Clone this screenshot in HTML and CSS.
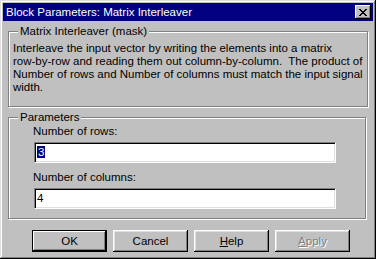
FILE: index.html
```html
<!DOCTYPE html>
<html lang="en">
<head>
  <meta charset="UTF-8" />
  <title>Block Parameters: Matrix Interleaver</title>
  <link rel="stylesheet" href="styles.css">
</head>
<body>
  <div class="window">
    <div class="titlebar">
      <span class="title">Block Parameters: Matrix Interleaver</span>
      <span class="close">
        <svg width="8" height="7" viewBox="0 0 8 7"><path d="M0 0h2v1h1v1h2v-1h1v-1h2v1h-1v1h-1v1h-1v1h1v1h1v1h1v1h-2v-1h-1v-1h-2v1h-1v1h-2v-1h1v-1h1v-1h1v-1h-1v-1h-1v-1h-1z" fill="#000"/></svg>
      </span>
    </div>

    <div class="content">
      <!-- mask description -->
      <fieldset class="group">
        <legend>Matrix Interleaver (mask)</legend>
        <p class="desc">Interleave the input vector by writing the elements into a matrix<br>
          row-by-row and reading them out column-by-column.&nbsp; The product of<br>
          Number of rows and Number of columns must match the input signal<br>
          width.</p>
      </fieldset>

      <!-- parameters -->
      <fieldset class="group">
        <legend>Parameters</legend>
        <div class="params">
          <label>Number of rows:</label>
          <div class="field"><span class="sel">3</span></div>
          <label class="second">Number of columns:</label>
          <div class="field">4</div>
        </div>
      </fieldset>

      <div class="buttons">
        <div class="btn default">OK</div>
        <div class="btn">Cancel</div>
        <div class="btn"><u>H</u>elp</div>
        <div class="btn disabled"><u>A</u>pply</div>
      </div>
    </div>
  </div>
</body>
</html>
```

FILE: styles.css
```css
body {
  margin: 0;
  font-family: "Liberation Sans", Arial, sans-serif;
  font-size: 11.5px;
  color: #000;
}
.window {
  width: 376px;
  height: 259px;
  box-sizing: border-box;
  padding: 3px;
  background: #c0c0c0;
  box-shadow: inset -1px -1px #000, inset 1px 1px #dfdfdf, inset -2px -2px #808080, inset 2px 2px #fff;
  display: flex;
  flex-direction: column;
}
.titlebar {
  height: 18px;
  background: #000080;
  color: #fff;
  display: flex;
  align-items: center;
  justify-content: space-between;
  padding: 0 2px 0 3px;
}
.close {
  width: 16px;
  height: 14px;
  box-sizing: border-box;
  background: #c0c0c0;
  box-shadow: inset -1px -1px #000, inset 1px 1px #fff, inset -2px -2px #808080;
  display: flex;
  align-items: center;
  justify-content: center;
}
.content {
  padding: 4px 7px 0 5px;
}
.group {
  margin: 0;
  padding: 0 4px 12px 4px;
  border: 1px solid #808080;
  box-shadow: inset 1px 1px #fff, 1px 1px #fff;
}
.group + .group { margin-top: 4px; padding-bottom: 9px; }
.group legend {
  margin-left: 5px;
  padding: 0 2px 0 2px;
  background: #c0c0c0;
  line-height: 13px;
}
.desc {
  margin: 4px 0 0 0;
  line-height: 13px;
  white-space: nowrap;
}
.params {
  padding-left: 20px;
}
.params label {
  display: block;
  margin-top: 1px;
  line-height: 13px;
}
.params label.second { margin-top: 8px; }
.field {
  width: 302px;
  height: 21px;
  box-sizing: border-box;
  margin: 4px 0 0 1px;
  padding: 3px 2px;
  background: #fff;
  border: 1px solid;
  border-color: #808080 #fff #fff #808080;
  box-shadow: inset 1px 1px #000, inset -1px -1px #dfdfdf;
  line-height: 13px;
}
.sel {
  background: #000080;
  color: #fff;
  padding: 0 1px;
}
.buttons {
  display: flex;
  gap: 6px;
  margin-top: 11px;
  padding-left: 24px;
}
.btn {
  width: 75px;
  height: 22px;
  box-sizing: border-box;
  display: flex;
  align-items: center;
  justify-content: center;
  box-shadow: inset -1px -1px #000, inset 1px 1px #fff, inset -2px -2px #808080, inset 2px 2px #dfdfdf;
}
.btn.default {
  border: 1px solid #000;
  box-shadow: inset -1px -1px #000, inset 1px 1px #fff, inset -2px -2px #808080;
}
.btn.disabled {
  color: #808080;
  text-shadow: 1px 1px #fff;
}
```
